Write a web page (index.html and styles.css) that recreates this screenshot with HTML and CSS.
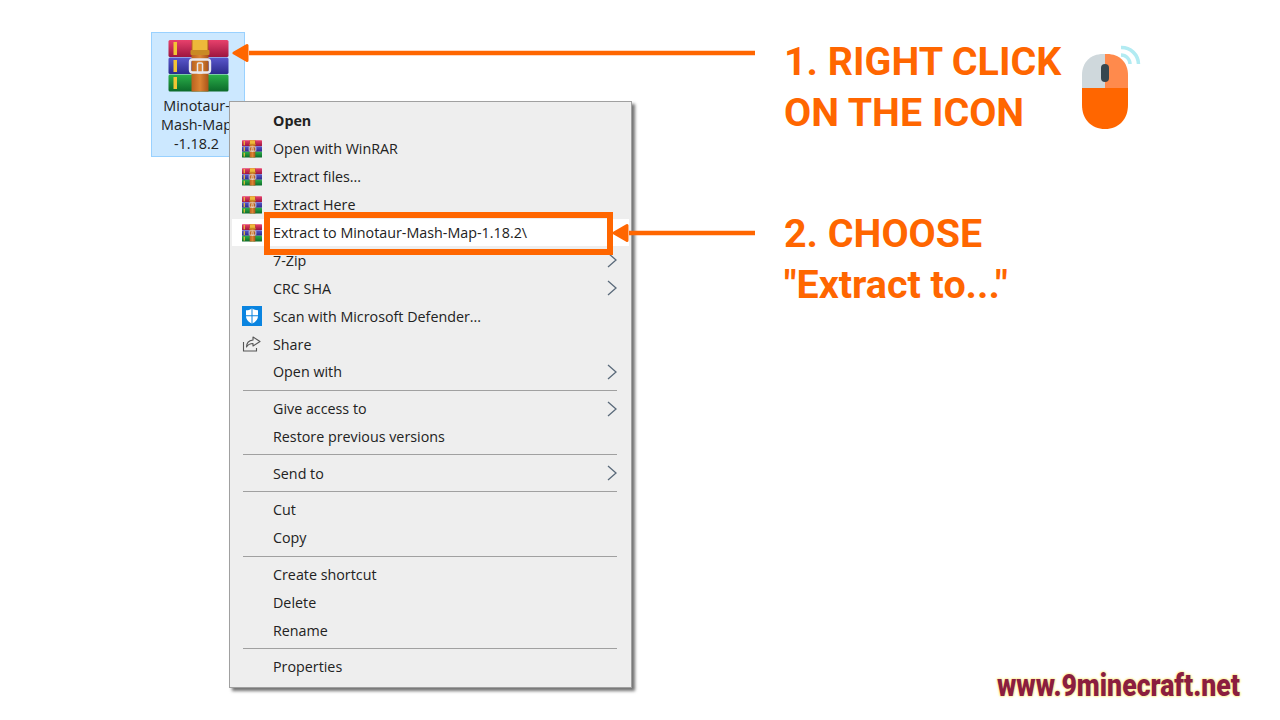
FILE: index.html
```html
<!DOCTYPE html>
<html lang="en">
<head>
  <meta charset="UTF-8" />
  <title>Extract to folder</title>
  <link rel="stylesheet" href="styles.css">
</head>
<body>

  <svg class="defs" width="0" height="0">
    <defs>
      <linearGradient id="red" x1="0" y1="0" x2="0" y2="1">
        <stop offset="0" stop-color="#e8416c"/><stop offset="1" stop-color="#9c1540"/>
      </linearGradient>
      <linearGradient id="blue" x1="0" y1="0" x2="0" y2="1">
        <stop offset="0" stop-color="#5a58cc"/><stop offset="1" stop-color="#2b2a8c"/>
      </linearGradient>
      <linearGradient id="green" x1="0" y1="0" x2="0" y2="1">
        <stop offset="0" stop-color="#2bb04a"/><stop offset="1" stop-color="#0c6a2a"/>
      </linearGradient>
      <linearGradient id="belt" x1="0" y1="0" x2="1" y2="0">
        <stop offset="0" stop-color="#b9621f"/><stop offset=".5" stop-color="#dc8433"/><stop offset="1" stop-color="#a95419"/>
      </linearGradient>
      <symbol id="rar" viewBox="0 0 60 52">
        <rect x="0" y="0" width="60" height="17" rx="1.5" fill="url(#red)"/>
        <rect x="0" y="17.5" width="60" height="16.5" rx="1.5" fill="url(#blue)"/>
        <rect x="0" y="34.5" width="60" height="17" rx="1.5" fill="url(#green)"/>
        <rect x="5" y="2" width="3.5" height="13" fill="#f3c534"/>
        <rect x="5" y="20" width="3.5" height="12" fill="#f3c534"/>
        <rect x="5" y="37" width="3.5" height="12" fill="#f3c534"/>
        <rect x="23" y="0" width="17" height="51.5" fill="url(#belt)"/>
        <rect x="24" y="0" width="15" height="12" fill="#eeb93a"/>
        <rect x="22" y="10" width="19" height="5" rx="1" fill="#c98a24"/>
        <rect x="21.5" y="19.500" width="20" height="13" rx="2.500" fill="none" stroke="#e8e8ee" stroke-width="2.400"/>
        <rect x="29" y="23" width="5" height="10" rx="1" fill="none" stroke="#e8e8ee" stroke-width="1.500"/>
      </symbol>
    </defs>
  </svg>

  <div class="desktop-icon">
    <svg class="rar-big"><use href="#rar"/></svg>
    <div class="desktop-label">Minotaur-<br>Mash-Map<br>-1.18.2</div>
  </div>

  <div class="menu">
    <div class="item bold"><span class="slot"></span><span>Open</span></div>
    <div class="item"><svg class="slot"><use href="#rar"/></svg><span>Open with WinRAR</span></div>
    <div class="item"><svg class="slot"><use href="#rar"/></svg><span>Extract files...</span></div>
    <div class="item"><svg class="slot"><use href="#rar"/></svg><span>Extract Here</span></div>
    <div class="item active"><svg class="slot"><use href="#rar"/></svg><span>Extract to Minotaur-Mash-Map-1.18.2\</span></div>
    <div class="item"><span class="slot"></span><span>7-Zip</span><svg class="chev" viewBox="0 0 10 16"><path d="M1 1l8 7-8 7"/></svg></div>
    <div class="item"><span class="slot"></span><span>CRC SHA</span><svg class="chev" viewBox="0 0 10 16"><path d="M1 1l8 7-8 7"/></svg></div>
    <div class="item">
      <svg class="slot" viewBox="0 0 20 20">
        <rect width="20" height="20" fill="#0a84e0"/>
        <path d="M10 2.500c2 1.300 4 1.800 6 1.800v5.700c0 3.600-2.500 6-6 7.500-3.500-1.500-6-3.900-6-7.500V4.300c2 0 4-.5 6-1.800z" fill="#fff"/>
        <path d="M9.500 2.500h1v15h-1zM4 9.300h12v1H4z" fill="#0a84e0"/>
      </svg>
      <span>Scan with Microsoft Defender...</span>
    </div>
    <div class="item">
      <svg class="slot" viewBox="0 0 20 20">
        <path d="M1.500 8v9h13v-3" fill="none" stroke="#555" stroke-width="1.100"/>
        <path d="M11 3l7 4.500-7 4.500V9.500c-3 0-5 1-6.500 3.500 0-4 2.500-6.500 6.500-7z" fill="none" stroke="#555" stroke-width="1.100" stroke-linejoin="round"/>
      </svg>
      <span>Share</span>
    </div>
    <div class="item"><span class="slot"></span><span>Open with</span><svg class="chev" viewBox="0 0 10 16"><path d="M1 1l8 7-8 7"/></svg></div>
    <div class="sep"></div>
    <div class="item"><span class="slot"></span><span>Give access to</span><svg class="chev" viewBox="0 0 10 16"><path d="M1 1l8 7-8 7"/></svg></div>
    <div class="item"><span class="slot"></span><span>Restore previous versions</span></div>
    <div class="sep"></div>
    <div class="item"><span class="slot"></span><span>Send to</span><svg class="chev" viewBox="0 0 10 16"><path d="M1 1l8 7-8 7"/></svg></div>
    <div class="sep"></div>
    <div class="item"><span class="slot"></span><span>Cut</span></div>
    <div class="item"><span class="slot"></span><span>Copy</span></div>
    <div class="sep"></div>
    <div class="item"><span class="slot"></span><span>Create shortcut</span></div>
    <div class="item"><span class="slot"></span><span>Delete</span></div>
    <div class="item"><span class="slot"></span><span>Rename</span></div>
    <div class="sep"></div>
    <div class="item"><span class="slot"></span><span>Properties</span></div>
  </div>

  <!-- orange annotations on top of the screenshot -->
  <div class="pick-box"></div>

  <svg class="arrow arrow-one" viewBox="0 0 523 20">
    <path d="M17 10H523" stroke="#ff6600" stroke-width="4.500"/>
    <path d="M2 10L15 2.500V17.500z" fill="#ff6600" stroke="#ff6600" stroke-width="3" stroke-linejoin="round"/>
  </svg>
  <svg class="arrow arrow-two" viewBox="0 0 143 20">
    <path d="M17 10H143" stroke="#ff6600" stroke-width="4.500"/>
    <path d="M2 10L15 2.500V17.500z" fill="#ff6600" stroke="#ff6600" stroke-width="3" stroke-linejoin="round"/>
  </svg>

  <div class="note note-one">1. RIGHT CLICK<br>ON THE ICON</div>
  <div class="note note-two">2. CHOOSE<br>"Extract to..."</div>

  <svg class="mouse" viewBox="0 0 64 88">
    <path d="M25 10h-2C10.500 10 2 18.500 2 31v13h23z" fill="#cfd8dc"/>
    <path d="M25 10h2c12.500 0 21 8.500 21 21v13H25z" fill="#ff8a4c"/>
    <path d="M2 44h46v17c0 14-9 24-23 24S2 75 2 61z" fill="#ff6600"/>
    <rect x="21" y="20" width="8" height="18" rx="4" fill="#37474f"/>
    <path d="M41 3.500A17 17 0 0 1 58.500 20M41 11a9 9 0 0 1 9 9" fill="none" stroke="#b2ebf2" stroke-width="3.500"/>
  </svg>

  <div class="watermark">www.9minecraft.net</div>

</body>
</html>
```

FILE: styles.css
```css
* {
  margin: 0;
  padding: 0;
  box-sizing: border-box;
}

html, body {
  width: 1280px;
  height: 720px;
  background: white;
  overflow: hidden;
}

body {
  position: relative;
  font-family: 'Open Sans', 'Noto Sans', sans-serif;
}

.defs {
  position: absolute;
}

/* desktop icon */
.desktop-icon {
  position: absolute;
  left: 151px;
  top: 32px;
  width: 94px;
  height: 125px;
  background: #cce8ff;
  border: 1px solid #99d1ff;
  display: flex;
  flex-direction: column;
  align-items: center;
  padding-top: 7px;
}

.rar-big {
  flex: none;
  width: 61px;
  height: 52px;
}

.desktop-label {
  margin-top: 4px;
  margin-right: 3px;
  font-size: 14.400px;
  line-height: 19px;
  color: #222;
  text-align: center;
  white-space: nowrap;
}

/* context menu */
.menu {
  position: absolute;
  left: 229px;
  top: 101px;
  width: 403px;
  height: 587px;
  background: #eeeeee;
  border: 1px solid #a0a0a0;
  box-shadow: 3px 3px 3px rgba(0, 0, 0, 0.55);
  padding: 5px 2px 0;
  font-size: 14.300px;
  color: #222;
}

.item {
  display: flex;
  align-items: center;
  height: 27.900px;
  padding-left: 10px;
  padding-right: 12px;
  white-space: nowrap;
}

.item.bold {
  font-weight: 700;
}

.item.active {
  background: white;
}

.slot {
  display: block;
  flex: none;
  width: 20px;
  height: 20px;
  margin-right: 11px;
}

.chev {
  width: 10px;
  height: 16px;
  margin-left: auto;
}

.chev path {
  fill: none;
  stroke: #5a6a7a;
  stroke-width: 1.300;
}

.sep {
  height: 1px;
  margin: 4px 12px 3.750px 11px;
  background: #a0a0a0;
}

/* annotations */
.pick-box {
  position: absolute;
  left: 264px;
  top: 212px;
  width: 349px;
  height: 43px;
  border: 6px solid #ff6600;
}

.arrow {
  position: absolute;
  height: 20px;
}

.arrow-one {
  left: 232px;
  top: 43px;
  width: 523px;
}

.arrow-two {
  left: 612px;
  top: 223px;
  width: 143px;
}

.note {
  position: absolute;
  left: 784px;
  font-family: Roboto, sans-serif;
  font-weight: 700;
  font-size: 39.400px;
  line-height: 50.500px;
  color: #ff6600;
  white-space: nowrap;
}

.note-one {
  top: 37px;
}

.note-two {
  top: 209px;
}

.mouse {
  position: absolute;
  left: 1080px;
  top: 44px;
  width: 64px;
  height: 88px;
}

.watermark {
  position: absolute;
  left: 997px;
  top: 667px;
  font-family: Roboto, sans-serif;
  font-weight: 900;
  font-size: 32px;
  line-height: 36px;
  color: #8b1e3f;
  text-shadow: 0 0 2px #fff0a0, 0 0 2px #fff0a0, 0 0 3px #fff0a0, 0 0 3px #fff0a0;
  white-space: nowrap;
  transform: scaleX(0.832);
  transform-origin: left center;
}
```
